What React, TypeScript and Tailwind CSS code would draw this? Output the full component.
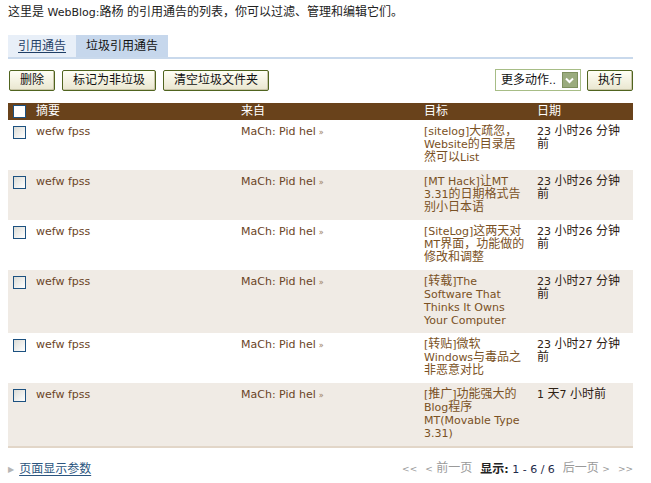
import React from 'react'

// CJK runs are set a pixel larger than the Latin text, like the old Verdana + SimSun pairing
const cjk = /([\u2E80-\u9FFF\u3000-\u303F\uFF00-\uFFEF]+)/

function T({ s }: { s: string }) {
  return (
    <>
      {s.split(cjk).map((part, i) =>
        i % 2 ? (
          <span key={i} className="text-[12px]">
            {part}
          </span>
        ) : (
          part
        )
      )}
    </>
  )
}

type Ping = {
  excerpt: string
  from: string
  target: string
  date: string
}

const pings: Ping[] = [
  { excerpt: 'wefw fpss', from: 'MaCh: Pid hel', target: '[sitelog]大疏忽，Website的目录居然可以List', date: '23 小时26 分钟前' },
  { excerpt: 'wefw fpss', from: 'MaCh: Pid hel', target: '[MT Hack]让MT 3.31的日期格式告别小日本语', date: '23 小时26 分钟前' },
  { excerpt: 'wefw fpss', from: 'MaCh: Pid hel', target: '[SiteLog]这两天对MT界面，功能做的修改和调整', date: '23 小时26 分钟前' },
  { excerpt: 'wefw fpss', from: 'MaCh: Pid hel', target: '[转载]The Software That Thinks It Owns Your Computer', date: '23 小时27 分钟前' },
  { excerpt: 'wefw fpss', from: 'MaCh: Pid hel', target: '[转贴]微软Windows与毒品之非恶意对比', date: '23 小时27 分钟前' },
  { excerpt: 'wefw fpss', from: 'MaCh: Pid hel', target: '[推广]功能强大的Blog程序MT(Movable Type 3.31)', date: '1 天7 小时前' },
]

function Checkbox() {
  return (
    <span className="block h-[13px] w-[13px] border border-[#1c5180] bg-gradient-to-br from-[#dcdcd6] to-[#ffffff]" />
  )
}

function Button({ label }: { label: string }) {
  return (
    <button
      type="button"
      className="h-[21px] rounded-[2px] border border-[#50641f] bg-gradient-to-b from-[#fffff6] to-[#e9e6cf] px-[10px] leading-[19px] text-[#111] shadow-[inset_-1px_-1px_0_#c9c5a8]"
    >
      <T s={label} />
    </button>
  )
}

export default function App() {
  return (
    <div
      className="min-h-[483px] w-[651px] bg-white px-2 pt-[5px] text-[11px] leading-[13px] text-[#222]"
      style={{ fontFamily: '"DejaVu Sans", "Noto Sans CJK SC", sans-serif' }}
    >
      <p className="leading-[14px]">
        <T s="这里是 WebBlog:路杨 的引用通告的列表，你可以过滤、管理和编辑它们。" />
      </p>

      {/* tabs */}
      <div className="mt-[15px] flex w-[625px] border-b-2 border-[#c9d9ec]">
        <a className="flex h-[22px] items-center bg-[#e8eff8] px-[10px] text-[#1f3f66] underline underline-offset-2">
          <T s="引用通告" />
        </a>
        <span className="flex h-[22px] items-center bg-[#c6d7ec] px-[10px] text-[#111]">
          <T s="垃圾引用通告" />
        </span>
      </div>

      {/* actions */}
      <div className="mt-[10px] flex w-[625px] items-center">
        <div className="ml-px flex gap-[7px]">
          <Button label="删除" />
          <Button label="标记为非垃圾" />
          <Button label="清空垃圾文件夹" />
        </div>
        <div className="ml-auto flex items-center gap-[6px]">
          <div className="flex h-[22px] w-[86px] items-center border border-[#a7bd86] bg-white pl-[5px] pr-[2px]">
            <span className="flex-1 whitespace-nowrap text-[#111]">
              <T s="更多动作.." />
            </span>
            <span className="flex h-[16px] w-[16px] items-center justify-center border border-[#7d8f5e] bg-[#9aab7e]">
              <svg width="9" height="7" viewBox="0 0 9 7">
                <path d="M1 1.5 L4.5 5 L8 1.5" fill="none" stroke="#fff" strokeWidth="2" />
              </svg>
            </span>
          </div>
          <Button label="执行" />
        </div>
      </div>

      {/* list */}
      <table className="mt-[12px] w-[625px] table-fixed border-collapse">
        <colgroup>
          <col className="w-[24px]" />
          <col className="w-[205px]" />
          <col className="w-[183px]" />
          <col className="w-[113px]" />
          <col className="w-[100px]" />
        </colgroup>
        <thead>
          <tr className="h-[17px] bg-[#69421b] text-left text-white">
            <th className="pl-[5px] align-middle font-normal">
              <span className="block h-[13px] w-[13px] border border-[#1c5180] bg-white" />
            </th>
            <th className="pl-[4px] font-normal"><T s="摘要" /></th>
            <th className="pl-[4px] font-normal"><T s="来自" /></th>
            <th className="pl-[4px] font-normal"><T s="目标" /></th>
            <th className="pl-[4px] font-normal"><T s="日期" /></th>
          </tr>
        </thead>
        <tbody>
          {pings.map((p, i) => (
            <tr key={i} className={i % 2 ? 'bg-[#f0ebe5]' : 'bg-white'}>
              <td className="pb-[6px] pl-[5px] pt-[6px] align-top">
                <Checkbox />
              </td>
              <td className="pb-[6px] pl-[4px] pt-[5px] align-top text-[#6b4426]">{p.excerpt}</td>
              <td className="pb-[6px] pl-[4px] pt-[5px] align-top">
                <span className="text-[#6b4426]">{p.from}</span>
                <span className="ml-[3px] text-[8px] text-[#9a7a5c]">»</span>
              </td>
              <td className="pb-[6px] pl-[4px] pr-[7px] pt-[5px] align-top text-[#7a5124]">
                <T s={p.target} />
              </td>
              <td className="pb-[6px] pl-[4px] pr-[8px] pt-[5px] align-top text-[#2e2114]">
                <T s={p.date} />
              </td>
            </tr>
          ))}
        </tbody>
      </table>
      <div className="h-[2px] w-[625px] bg-[#e2d6c8]" />

      {/* footer */}
      <div className="mt-[14px] flex w-[625px] items-center">
        <span className="mr-[5px] text-[8px] text-[#b5b5b5]">▶</span>
        <a className="text-[#2b5580] underline underline-offset-2">
          <T s="页面显示参数" />
        </a>
        <div className="ml-auto flex items-center gap-[8px] text-[#9a9a9a]">
          <span className="text-[9px]">&lt;&lt;</span>
          <span>
            <span className="text-[9px]">&lt;</span> <T s="前一页" />
          </span>
          <span className="text-[#222]">
            <span className="font-bold"><T s="显示" />:</span>{' '}
            <span className="text-[#1e2a4a]">1 - 6 / 6</span>
          </span>
          <span>
            <T s="后一页" /> <span className="text-[9px]">&gt;</span>
          </span>
          <span className="text-[9px]">&gt;&gt;</span>
        </div>
      </div>
    </div>
  )
}
